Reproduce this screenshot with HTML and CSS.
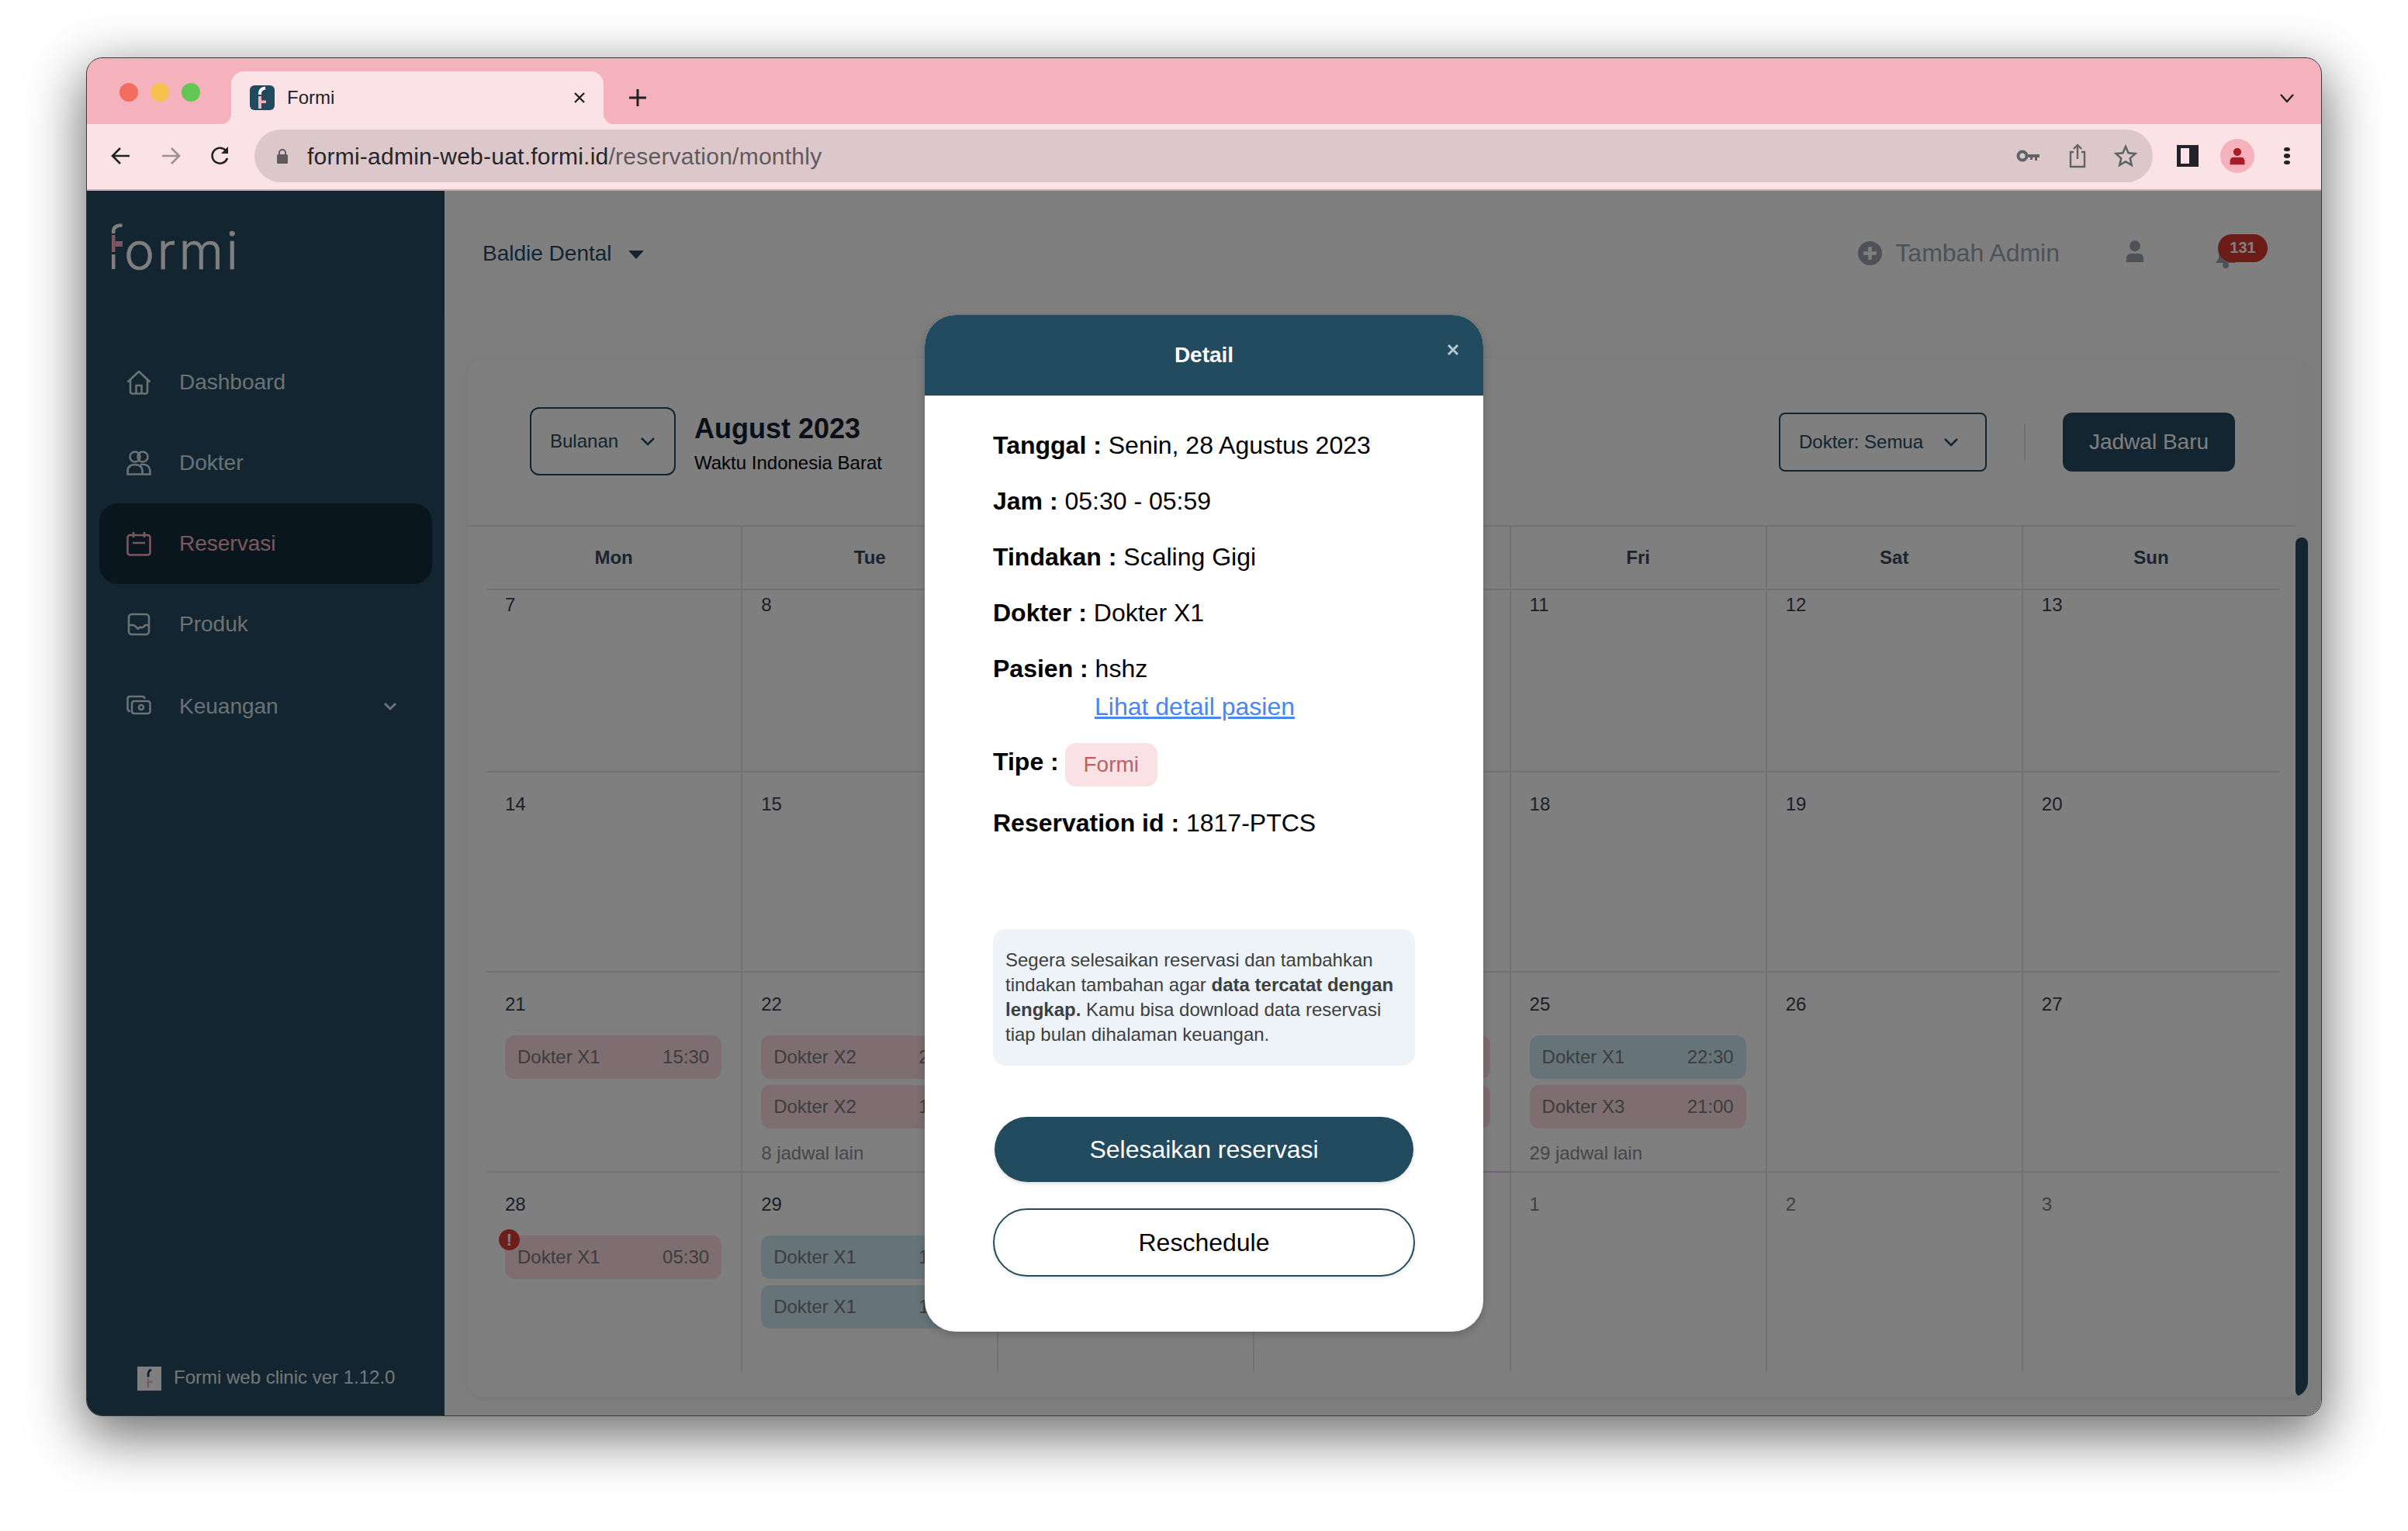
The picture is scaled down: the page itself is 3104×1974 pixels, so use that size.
FILE: index.html
```html
<!DOCTYPE html>
<html lang="en">

<head>
  <title>Formi</title>
  <link rel="stylesheet" href="styles.css">
</head>

<body>
  <div class="window">
    <!-- browser chrome -->
    <div class="tabstrip">
      <div class="lights">
        <span class="light red"></span>
        <span class="light yellow"></span>
        <span class="light green"></span>
      </div>
      <div class="tab">
        <svg class="favicon" viewBox="0 0 32 32">
          <rect width="32" height="32" rx="6" fill="#224a5f"/>
          <path d="M13 12V10.500Q13 4.500 20 3.500" fill="none" stroke="#fff" stroke-width="4"/>
          <rect x="11" y="14" width="4" height="16" fill="#f5b2bc"/>
          <rect x="15" y="19.500" width="6" height="3.500" fill="#f5b2bc"/>
        </svg>
        <span class="tab-title">Formi</span>
        <svg class="tab-close" viewBox="0 0 16 16"><path d="M2 2l12 12M14 2L2 14" stroke="#222" stroke-width="2.400"/></svg>
      </div>
      <svg class="new-tab" viewBox="0 0 24 24"><path d="M12 1v22M1 12h22" stroke="#222" stroke-width="3"/></svg>
      <svg class="tab-list" viewBox="0 0 20 20"><path d="M2 6l8 9 8-9" fill="none" stroke="#222" stroke-width="2.400"/></svg>
    </div>

    <div class="toolbar">
      <svg class="nav-icon" viewBox="0 0 28 28"><path d="M25 14H4M13 4L3 14l10 10" fill="none" stroke="#222" stroke-width="2.600"/></svg>
      <svg class="nav-icon" viewBox="0 0 28 28"><path d="M3 14h21M15 4l10 10-10 10" fill="none" stroke="#a08f93" stroke-width="2.600"/></svg>
      <svg class="nav-icon" viewBox="0 0 28 28"><path d="M23 17a10 10 0 1 1-2-10" fill="none" stroke="#222" stroke-width="2.600"/><path d="M24 2v9h-9z" fill="#222"/></svg>
      <div class="omnibox">
        <svg class="lock" viewBox="0 0 16 20"><path d="M4 9V6a4 4 0 0 1 8 0v3" fill="none" stroke="#5f5a60" stroke-width="2"/><rect x="1" y="8" width="14" height="12" rx="1.500" fill="#5f5a60"/></svg>
        <span class="url">formi-admin-web-uat.formi.id<span class="url-path">/reservation/monthly</span></span>
        <svg class="omni-icon key" viewBox="0 0 30 18"><circle cx="8" cy="9" r="5.500" fill="none" stroke="#5f6368" stroke-width="4"/><path d="M14 7h16v4h-3v4h-3v-4h-3v3h-3v-3h-4z" fill="#5f6368"/></svg>
        <svg class="omni-icon share" viewBox="0 0 24 32"><path d="M7 11H3v19h18V11h-4M12 20V2M7 7l5-5 5 5" fill="none" stroke="#5f6368" stroke-width="2.400"/></svg>
        <svg class="omni-icon star" viewBox="0 0 30 30"><path d="M15 3l3.600 8.200 8.900.9-6.700 6 1.900 8.800-7.700-4.500-7.700 4.500 1.900-8.800-6.700-6 8.900-.9z" fill="none" stroke="#5f6368" stroke-width="2.600"/></svg>
      </div>
      <div class="side-panel"><span></span></div>
      <div class="avatar">
        <svg viewBox="0 0 24 28"><circle cx="12" cy="8" r="6" fill="#a81c26"/><path d="M1 27v-5q0-6 6-6h10q6 0 6 6v5z" fill="#a81c26"/></svg>
      </div>
      <div class="kebab"><span></span><span></span><span></span></div>
    </div>

    <div class="app">
      <aside class="sidebar">
        <div class="brand">
          <svg class="brand-f" viewBox="0 0 16 60">
            <path d="M2.200 13V10.500Q2.200 2.500 13.500 2.500" fill="none" stroke="#fff" stroke-width="4.500"/>
            <rect x="0" y="15" width="4.500" height="22" fill="#f5b2bc"/>
            <rect x="4.500" y="23" width="9.500" height="7" fill="#f5b2bc"/>
            <rect x="0" y="40" width="4.500" height="19" fill="#fff"/>
          </svg>
          <span class="brand-name">ormi</span>
        </div>

        <nav class="menu">
          <a class="menu-item">
            <svg class="menu-icon" viewBox="0 0 32 32"><path d="M1.500 15.500L16 2l14.500 13.500M5 12.500V28q0 2.500 2.500 2.500h17q2.500 0 2.500-2.500V12.500M12.500 30.500V20h7v10.500" fill="none" stroke="currentColor" stroke-width="2.600" stroke-linejoin="round"/></svg>
            Dashboard
          </a>
          <a class="menu-item">
            <svg class="menu-icon" viewBox="0 0 32 32"><circle cx="11" cy="8" r="6.500" fill="none" stroke="currentColor" stroke-width="2.600"/><circle cx="21" cy="8" r="6.500" fill="none" stroke="currentColor" stroke-width="2.600"/><path d="M1.500 30.500V27q0-9 9.500-9t9.500 9v3.500zM18 18q12-1.500 12.500 9v3.500H20" fill="none" stroke="currentColor" stroke-width="2.600"/></svg>
            Dokter
          </a>
          <a class="menu-item active">
            <svg class="menu-icon" viewBox="0 0 32 32"><rect x="1.500" y="5" width="29" height="25.500" rx="3" fill="none" stroke="currentColor" stroke-width="2.600"/><path d="M9 1v7M23 1v7M8 15h16" fill="none" stroke="currentColor" stroke-width="2.600"/></svg>
            Reservasi
          </a>
          <a class="menu-item">
            <svg class="menu-icon" viewBox="0 0 32 32"><rect x="3" y="3" width="26" height="26" rx="4" fill="none" stroke="currentColor" stroke-width="2.600"/><path d="M3 17h5q3 0 5 3t3 1 3-1 5-3h5" fill="none" stroke="currentColor" stroke-width="2.600"/></svg>
            Produk
          </a>
          <a class="menu-item menu-item-last">
            <svg class="menu-icon" viewBox="0 0 32 32"><path d="M5 22q-3.500 0-3.500-3V6q0-3 3-3h16q3 0 3 3" fill="none" stroke="currentColor" stroke-width="2.600"/><rect x="7" y="9" width="23.500" height="16" rx="3" fill="none" stroke="currentColor" stroke-width="2.600"/><circle cx="19" cy="17" r="3" fill="none" stroke="currentColor" stroke-width="2.600"/></svg>
            Keuangan
            <svg class="menu-chevron" viewBox="0 0 18 12"><path d="M2 2l7 7 7-7" fill="none" stroke="currentColor" stroke-width="3"/></svg>
          </a>
        </nav>

        <div class="version">
          <svg class="version-logo" viewBox="0 0 32 32">
            <rect width="32" height="32" fill="#fff"/>
            <path d="M14.500 14V10q0-4 4-6" fill="none" stroke="#224a5f" stroke-width="3"/>
            <rect x="13" y="16" width="2.600" height="12" fill="#f5b2bc"/>
            <rect x="15.600" y="19" width="4.500" height="2.500" fill="#f5b2bc"/>
          </svg>
          Formi web clinic ver 1.12.0
        </div>
      </aside>

      <main class="main">
        <header class="topbar">
          <div class="clinic">Baldie Dental <span class="caret"></span></div>
          <div class="topbar-right">
            <svg class="plus-circle" viewBox="0 0 30 30"><circle cx="15" cy="15" r="15" fill="#9ca3af"/><path d="M15 7v16M7 15h16" stroke="#fff" stroke-width="4.500"/></svg>
            <span class="add-admin">Tambah Admin</span>
            <svg class="user-icon" viewBox="0 0 22 28"><circle cx="11" cy="7" r="7" fill="#9ca3af"/><path d="M0 28v-5q0-6 6-6h10q6 0 6 6v5z" fill="#9ca3af"/></svg>
            <div class="bell-wrap">
              <svg class="bell" viewBox="0 0 28 34"><path d="M14 2q-9 1-9 11v8l-4 6h26l-4-6v-8q0-10-9-11z" fill="#9ca3af"/><circle cx="14" cy="30" r="4" fill="#9ca3af"/></svg>
              <span class="badge">131</span>
            </div>
          </div>
        </header>

        <section class="content">
          <div class="card">
            <div class="card-head">
              <div class="select select-view">Bulanan
                <svg class="chevron" viewBox="0 0 20 12"><path d="M2 2l8 8 8-8" fill="none" stroke="currentColor" stroke-width="2.600"/></svg>
              </div>
              <div class="month">
                <div class="month-name">August 2023</div>
                <div class="month-zone">Waktu Indonesia Barat</div>
              </div>
              <div class="select select-doctor">Dokter: Semua
                <svg class="chevron" viewBox="0 0 20 12"><path d="M2 2l8 8 8-8" fill="none" stroke="currentColor" stroke-width="2.600"/></svg>
              </div>
              <div class="head-sep"></div>
              <button class="new-btn">Jadwal Baru</button>
            </div>

            <div class="calendar">
              <div class="week week-names">
                <div class="day-name">Mon</div>
                <div class="day-name">Tue</div>
                <div class="day-name"></div>
                <div class="day-name"></div>
                <div class="day-name">Fri</div>
                <div class="day-name">Sat</div>
                <div class="day-name">Sun</div>
              </div>

              <div class="week week-scrolled">
                <div class="day"><div class="date">7</div></div>
                <div class="day"><div class="date">8</div></div>
                <div class="day"></div>
                <div class="day"></div>
                <div class="day"><div class="date">11</div></div>
                <div class="day"><div class="date">12</div></div>
                <div class="day"><div class="date">13</div></div>
              </div>

              <div class="week">
                <div class="day"><div class="date">14</div></div>
                <div class="day"><div class="date">15</div></div>
                <div class="day"></div>
                <div class="day"></div>
                <div class="day"><div class="date">18</div></div>
                <div class="day"><div class="date">19</div></div>
                <div class="day"><div class="date">20</div></div>
              </div>

              <div class="week">
                <div class="day">
                  <div class="date">21</div>
                  <div class="event pink"><span>Dokter X1</span><span>15:30</span></div>
                </div>
                <div class="day">
                  <div class="date">22</div>
                  <div class="event pink"><span>Dokter X2</span><span>20:00</span></div>
                  <div class="event pink"><span>Dokter X2</span><span>19:30</span></div>
                  <div class="more">8 jadwal lain</div>
                </div>
                <div class="day"></div>
                <div class="day day-hidden-date">
                  <div class="event pink"></div>
                  <div class="event pink"></div>
                </div>
                <div class="day">
                  <div class="date">25</div>
                  <div class="event blue"><span>Dokter X1</span><span>22:30</span></div>
                  <div class="event pink"><span>Dokter X3</span><span>21:00</span></div>
                  <div class="more">29 jadwal lain</div>
                </div>
                <div class="day"><div class="date">26</div></div>
                <div class="day"><div class="date">27</div></div>
              </div>

              <div class="week week-last">
                <div class="day">
                  <div class="date">28</div>
                  <div class="event pink">
                    <span class="alert">!</span>
                    <span>Dokter X1</span><span>05:30</span>
                  </div>
                </div>
                <div class="day">
                  <div class="date">29</div>
                  <div class="event blue"><span>Dokter X1</span><span>17:00</span></div>
                  <div class="event blue"><span>Dokter X1</span><span>16:00</span></div>
                </div>
                <div class="day"></div>
                <div class="day day-today"></div>
                <div class="day day-next"><div class="date">1</div></div>
                <div class="day day-next"><div class="date">2</div></div>
                <div class="day day-next"><div class="date">3</div></div>
              </div>
            </div>
            <div class="scrollbar"><div class="scroll-thumb"></div></div>
          </div>
        </section>
      </main>

      <!-- Detail modal -->
      <div class="backdrop">
        <div class="modal">
          <div class="modal-head">
            Detail
            <svg class="modal-close" viewBox="0 0 16 16"><path d="M2 2l12 12M14 2L2 14" stroke="#b8c6ce" stroke-width="3"/></svg>
          </div>
          <div class="modal-body">
            <p class="field"><b>Tanggal :</b> Senin, 28 Agustus 2023</p>
            <p class="field"><b>Jam :</b> 05:30 - 05:59</p>
            <p class="field"><b>Tindakan :</b> Scaling Gigi</p>
            <p class="field"><b>Dokter :</b> Dokter X1</p>
            <p class="field field-patient"><b>Pasien :</b> hshz</p>
            <a class="patient-link" href="#">Lihat detail pasien</a>
            <p class="field field-type"><b>Tipe :</b><span class="type-tag">Formi</span></p>
            <p class="field"><b>Reservation id :</b> 1817-PTCS</p>
            <div class="note">
              Segera selesaikan reservasi dan tambahkan tindakan tambahan agar <b>data tercatat dengan</b> <b>lengkap.</b> Kamu bisa download data reservasi tiap bulan dihalaman keuangan.
            </div>
            <button class="btn-finish">Selesaikan reservasi</button>
            <button class="btn-reschedule">Reschedule</button>
          </div>
        </div>
      </div>
    </div>
  </div>
</body>
</html>
```

FILE: styles.css
```css
* {
  box-sizing: border-box;
}

body {
  font-family: "Liberation Sans", Arial, sans-serif;
  background-color: #fff;
  margin: 0;
  padding: 75px 112px 100px;
}

.window {
  height: 1750px;
  border-radius: 20px;
  overflow: hidden;
  display: flex;
  flex-direction: column;
  outline: 1px solid #3a3a3a;
  box-shadow: 0 22px 70px 6px rgba(0, 0, 0, 0.56);
}

/* browser chrome */
.tabstrip {
  height: 85px;
  flex: none;
  display: flex;
  align-items: flex-end;
  background-color: #f5b2bc;
}

.lights {
  width: 186px;
  height: 68px;
  padding: 15px 0 0 42px;
  display: flex;
  gap: 16px;
}

.light {
  width: 24px;
  height: 24px;
  border-radius: 50%;
}

.red { background-color: #f26d60; }
.yellow { background-color: #f8c04e; }
.green { background-color: #62c655; }

.tab {
  width: 480px;
  height: 68px;
  display: flex;
  align-items: center;
  padding: 0 24px;
  background-color: #fbe2e6;
  border-radius: 16px 16px 0 0;
  position: relative;
}

/* concave feet of the active tab */
.tab::before,
.tab::after {
  content: "";
  position: absolute;
  bottom: 0;
  width: 14px;
  height: 14px;
}

.tab::before {
  left: -14px;
  background: radial-gradient(circle at 0 0, #f5b2bc 14px, #fbe2e6 14.500px);
}

.tab::after {
  right: -14px;
  background: radial-gradient(circle at 100% 0, #f5b2bc 14px, #fbe2e6 14.500px);
}

.favicon {
  width: 32px;
  height: 32px;
}

.tab-title {
  font-size: 24px;
  color: #222;
  margin-left: 16px;
}

.tab-close {
  width: 16px;
  height: 16px;
  margin-left: auto;
  margin-right: -1px;
}

.new-tab {
  width: 24px;
  height: 24px;
  margin: 0 0 22px 32px;
}

.tab-list {
  width: 20px;
  height: 20px;
  margin: 0 34px 24px auto;
}

.toolbar {
  height: 86px;
  flex: none;
  display: flex;
  align-items: center;
  padding: 0 0 2px 30px;
  background-color: #fbe2e6;
  border-bottom: 2px solid #c6adb2;
}

.nav-icon {
  width: 28px;
  height: 28px;
  margin-right: 36px;
}

.omnibox {
  width: 2447px;
  height: 68px;
  margin-left: -6px;
  border-radius: 34px;
  background-color: #dcc8ca;
  display: flex;
  align-items: center;
  padding-left: 28px;
}

.lock {
  width: 16px;
  height: 22px;
}

.url {
  font-size: 30px;
  letter-spacing: 0.24px;
  color: #26262a;
  margin: 2px 0 0 24px;
}

.url-path {
  color: #5f5a60;
}

.omni-icon {
  flex: none;
}

.key {
  width: 30px;
  height: 18px;
  margin-left: auto;
}

.share {
  width: 24px;
  height: 32px;
  margin-left: 37px;
}

.star {
  width: 30px;
  height: 30px;
  margin: 0 20px 0 35px;
}

.side-panel {
  width: 28px;
  height: 28px;
  margin-left: 31px;
  background-color: #222228;
  padding: 4px 12px 4px 5px;
}

.side-panel span {
  display: block;
  height: 100%;
  background-color: #fbe2e6;
}

.avatar {
  width: 44px;
  height: 44px;
  margin-left: 28px;
  border-radius: 50%;
  background-color: #f5b2bc;
  display: flex;
  align-items: center;
  justify-content: center;
}

.avatar svg {
  width: 24px;
  height: 24px;
}

.kebab {
  width: 8px;
  margin-left: 38px;
  display: flex;
  flex-direction: column;
  gap: 3px;
}

.kebab span {
  height: 5.500px;
  border-radius: 50%;
  background-color: #222;
}

/* app */
.app {
  flex: 1;
  display: flex;
  position: relative;
  min-height: 0;
}

.sidebar {
  width: 461px;
  flex: none;
  background-color: #244a60;
  display: flex;
  flex-direction: column;
}

.brand {
  height: 195px;
  padding: 42px 0 0 32px;
  display: flex;
  align-items: flex-start;
}

.brand-f {
  width: 16px;
  height: 60px;
}

.brand-name {
  font-family: Inter, sans-serif;
  font-weight: 300;
  font-size: 66px;
  line-height: 60px;
  letter-spacing: 3.500px;
  -webkit-text-stroke: 0.6px #fff;
  color: #fff;
  margin-top: 5px;
}

.menu {
  padding: 0 16px;
}

.menu-item {
  height: 104px;
  display: flex;
  align-items: center;
  padding-left: 35px;
  font-size: 28px;
  color: #d8e3e8;
  border-radius: 24px;
}

.menu-item.active {
  background-color: #142d3b;
  color: #f7b0bc;
}

.menu-item-last {
  margin-top: 2px;
}

.menu-icon {
  width: 32px;
  height: 32px;
  margin-right: 36px;
  flex: none;
}

.menu-chevron {
  width: 18px;
  height: 12px;
  margin-left: auto;
  margin-right: 45px;
}

.version {
  margin-top: auto;
  height: 63px;
  padding-left: 65px;
  display: flex;
  align-items: flex-start;
  font-size: 24px;
  color: #e8eef0;
}

.version-logo {
  width: 31px;
  height: 31px;
  margin-right: 16px;
}

.main {
  flex: 1;
  display: flex;
  flex-direction: column;
  background-color: #fafdfb;
  min-width: 0;
}

.topbar {
  height: 161px;
  flex: none;
  display: flex;
  align-items: center;
  justify-content: space-between;
  padding: 0 69px 0 49px;
  background-color: #fff;
}

.clinic {
  font-size: 28px;
  color: #244a60;
  display: flex;
  align-items: center;
  gap: 21px;
}

.caret {
  width: 0;
  height: 0;
  border-left: 10px solid transparent;
  border-right: 10px solid transparent;
  border-top: 11px solid #244a60;
  margin-top: 3px;
}

.topbar-right {
  display: flex;
  align-items: center;
}

.plus-circle {
  width: 31px;
  height: 31px;
}

.add-admin {
  font-size: 32px;
  color: #9ca3af;
  margin-left: 17px;
}

.user-icon {
  width: 22px;
  height: 28px;
  margin: -6px 92px 0 86px;
}

.bell-wrap {
  width: 68px;
  height: 42px;
  position: relative;
}

.bell {
  position: absolute;
  left: 0;
  top: 6px;
  width: 28px;
  height: 34px;
}

.badge {
  position: absolute;
  left: 4px;
  top: -4px;
  width: 64px;
  height: 36px;
  border-radius: 18px;
  background-color: #d6382e;
  color: #fff;
  font-weight: bold;
  font-size: 20px;
  text-align: center;
  line-height: 34px;
}

.content {
  flex: 1;
  padding: 55px 17px 24px 30px;
  min-height: 0;
}

.card {
  height: 100%;
  background-color: #fff;
  border-radius: 20px;
  box-shadow: 0 2px 6px rgba(0, 0, 0, 0.06);
  position: relative;
  overflow: hidden;
}

.card-head {
  height: 217px;
  display: flex;
  align-items: center;
  padding: 0 94px 0 80px;
  border-bottom: 2px solid #e4e4e6;
}

.select {
  border: 2px solid #244a60;
  color: #244a60;
  font-size: 24px;
  display: flex;
  align-items: center;
  justify-content: space-between;
}

.select-view {
  width: 188px;
  height: 88px;
  border-radius: 12px;
  padding: 0 24px;
  margin-top: -2px;
}

.select-doctor {
  width: 268px;
  height: 76px;
  border-radius: 8px;
  padding: 0 34px 0 24px;
  margin-left: auto;
}

.chevron {
  width: 20px;
  height: 12px;
}

.month {
  margin: 4px 0 0 24px;
}

.month-name {
  font-size: 36px;
  font-weight: bold;
  color: #161e30;
  line-height: 44px;
}

.month-zone {
  font-size: 24px;
  color: #000;
  line-height: 32px;
  margin-top: 6px;
}

.head-sep {
  width: 2px;
  height: 48px;
  margin: 0 48px;
  background-color: #dfe0e0;
}

.new-btn {
  width: 222px;
  height: 76px;
  border: none;
  border-radius: 12px;
  background-color: #244a60;
  color: #fff;
  font-family: inherit;
  font-size: 28px;
}

.calendar {
  margin: 0 37px 0 24px;
}

.week {
  display: grid;
  grid-template-columns: repeat(7, 1fr);
  height: 258px;
  border-bottom: 2px solid #e4e4e6;
}

.week-names {
  height: 82px;
}

.week-scrolled {
  height: 235px;
}

.week-scrolled .day {
  padding-top: 4px;
}

.week-last {
  height: 256px;
  border-bottom: none;
}

.day-name {
  display: flex;
  align-items: center;
  justify-content: center;
  font-size: 24px;
  font-weight: bold;
  color: #374a5f;
  border-right: 2px solid #e4e4e6;
}

.day-name:last-child,
.day:last-child {
  border-right: none;
}

.day {
  padding: 26px 25px 0 24px;
  border-right: 2px solid #e4e4e6;
  min-width: 0;
}

.day-hidden-date {
  padding-top: 81px;
}

.date {
  font-size: 24px;
  line-height: 30px;
  color: #374151;
  margin-bottom: 25px;
}

.day-today {
  box-shadow: 0 -2px 0 #e4c4fa;
}

.day-next {
  background-color: #fcfefd;
}

.day-next .date {
  color: #7b808a;
}

.event {
  height: 56px;
  display: flex;
  align-items: center;
  justify-content: space-between;
  padding: 0 16px;
  margin-bottom: 8px;
  border-radius: 12px;
  font-size: 24px;
  color: #7a7a7c;
  position: relative;
}

.pink { background-color: #fedce2; }
.blue { background-color: #cce8f2; }

.alert {
  position: absolute;
  left: -8px;
  top: -8px;
  width: 27px;
  height: 27px;
  border-radius: 50%;
  background-color: #d93c36;
  color: #fff;
  font-size: 22px;
  font-weight: bold;
  text-align: center;
  line-height: 27px;
}

.more {
  font-size: 24px;
  line-height: 30px;
  color: #8a8e94;
  margin-top: 17px;
}

.scrollbar {
  position: absolute;
  top: 0;
  right: 0;
  bottom: 0;
  width: 16px;
  background-color: #f8f8f8;
}

.scroll-thumb {
  position: absolute;
  left: 0;
  right: 0;
  top: 231px;
  bottom: 0;
  border-radius: 8px;
  background-color: #244a60;
}

/* modal */
.backdrop {
  position: absolute;
  inset: 0;
  padding-top: 160px;
  display: flex;
  justify-content: center;
  align-items: flex-start;
  background-color: rgba(0, 0, 0, 0.5);
}

.modal {
  width: 720px;
  height: 1311px;
  border-radius: 40px;
  background-color: #fff;
  overflow: hidden;
  box-shadow: 0 4px 12px rgba(0, 0, 0, 0.2);
}

.modal-head {
  height: 104px;
  display: flex;
  align-items: center;
  justify-content: center;
  background-color: #224b60;
  color: #fff;
  font-size: 28px;
  font-weight: bold;
  position: relative;
}

.modal-close {
  position: absolute;
  right: 31px;
  top: 37px;
  width: 16px;
  height: 16px;
}

.modal-body {
  padding: 40px 88px 0;
}

.field {
  font-size: 32px;
  line-height: 48px;
  color: #000;
  margin: 0 0 24px;
}

.field-patient {
  margin-bottom: 0;
}

.patient-link {
  display: block;
  font-size: 32px;
  line-height: 48px;
  color: #4a86f0;
  margin: 1px 0 23px 131px;
}

.field-type {
  display: flex;
  align-items: flex-start;
  gap: 8px;
  margin-bottom: 23px;
}

.type-tag {
  width: 119px;
  height: 56px;
  border-radius: 14px;
  background-color: #f9e1e6;
  color: #b86268;
  font-size: 28px;
  line-height: 56px;
  text-align: center;
}

.note {
  height: 176px;
  margin-top: 113px;
  padding: 24px 12px 0 16px;
  border-radius: 16px;
  background-color: #edf3f7;
  font-size: 24px;
  line-height: 32px;
  color: #3c3f42;
}

.btn-finish,
.btn-reschedule {
  display: block;
  font-family: inherit;
  font-size: 32px;
  border-radius: 44px;
}

.btn-finish {
  width: 540px;
  height: 84px;
  margin: 66px 2px 0;
  border: none;
  background-color: #224b60;
  color: #fff;
  box-shadow: 0 2px 4px rgba(0, 0, 0, 0.15);
}

.btn-reschedule {
  width: 544px;
  height: 88px;
  margin-top: 34px;
  border: 2px solid #224b60;
  background-color: #fff;
  color: #000;
  box-shadow: 0 2px 4px rgba(0, 0, 0, 0.1);
}
```
